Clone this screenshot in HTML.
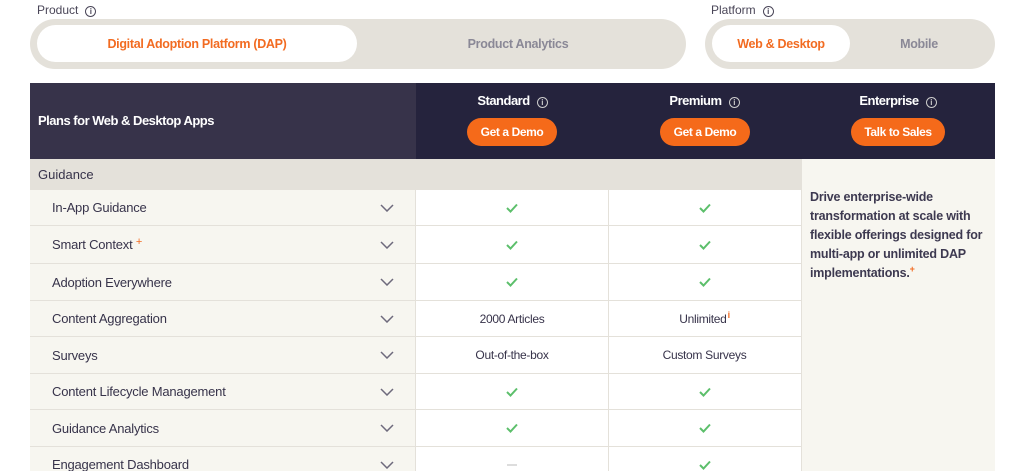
<!DOCTYPE html>
<html><head><meta charset="utf-8"><style>
*{margin:0;padding:0;box-sizing:border-box}
html,body{width:1024px;height:471px;overflow:hidden}
body{background:#fff;font-family:"Liberation Sans",sans-serif;position:relative;color:#37334a}
.a{position:absolute}
.lbl{font-size:12px;color:#4a4658;top:3px}
.info{display:inline-block;width:11px;height:11px;border:1px solid currentColor;border-radius:50%;font-size:8px;line-height:9px;text-align:center;vertical-align:0px;margin-left:7px;font-weight:bold}
.pill{background:#e4e1da;border-radius:25px}
.sel{background:#fff;border-radius:19px;color:#f26b21;font-size:12.5px;display:flex;align-items:center;justify-content:center;letter-spacing:-0.3px;font-weight:bold}
.un{color:#8a8896;font-size:12.5px;display:flex;align-items:center;justify-content:center;letter-spacing:-0.3px;font-weight:bold}
.hd{color:#fff;font-weight:bold;font-size:13px;letter-spacing:-0.5px;text-align:center}
.btn{background:#f56a1a;color:#fff;font-weight:bold;font-size:12px;border-radius:14px;height:28px;line-height:28px;text-align:center;letter-spacing:-0.4px}
.row{position:absolute;left:30px;width:771px;border-bottom:1px solid #e4e1da}
.row .f{position:absolute;left:0;top:0;bottom:0;width:386px;background:#f7f6f0;border-right:1px solid #e4e1da;font-size:13px;padding-left:22px;display:flex;align-items:center;letter-spacing:-0.2px}
.row .c{position:absolute;top:0;bottom:0;width:193px;display:flex;align-items:center;justify-content:center;font-size:12px;letter-spacing:-0.3px}
.row .c1{left:386px;border-right:1px solid #e4e1da}
.row .c2{left:578px}
.chev{position:absolute;left:350px;top:50%;margin-top:-4px}
</style></head><body>
<div class="a lbl" style="left:37px">Product<span class="info">i</span></div>
<div class="a lbl" style="left:711px">Platform<span class="info">i</span></div>
<div class="a pill" style="left:30px;top:19px;width:656px;height:50px"></div>
<div class="a sel" style="left:37px;top:25px;width:320px;height:37px">Digital Adoption Platform (DAP)</div>
<div class="a un" style="left:357px;top:25px;width:322px;height:37px">Product Analytics</div>
<div class="a pill" style="left:705px;top:19px;width:290px;height:50px"></div>
<div class="a sel" style="left:712px;top:25px;width:138px;height:37px">Web &amp; Desktop</div>
<div class="a un" style="left:850px;top:25px;width:138px;height:37px">Mobile</div>

<div class="a" style="left:30px;top:83px;width:386px;height:76px;background:#37334a"></div>
<div class="a" style="left:416px;top:83px;width:579px;height:76px;background:#25233d"></div>
<div class="a hd" style="left:38px;top:113px;font-size:13px">Plans for Web &amp; Desktop Apps</div>
<div class="a hd" style="left:416px;top:93px;width:193px">Standard<span class="info" style="color:#ccc">i</span></div>
<div class="a hd" style="left:608px;top:93px;width:193px">Premium<span class="info" style="color:#ccc">i</span></div>
<div class="a hd" style="left:801px;top:93px;width:194px">Enterprise<span class="info" style="color:#ccc">i</span></div>
<div class="a btn" style="left:467px;top:118px;width:90px">Get a Demo</div>
<div class="a btn" style="left:660px;top:118px;width:90px">Get a Demo</div>
<div class="a btn" style="left:851px;top:118px;width:94px">Talk to Sales</div>

<div class="a" style="left:30px;top:159px;width:771px;height:31px;background:#e4e1da;font-size:13px;padding-left:8px;line-height:31px">Guidance</div>
<div class="a" style="left:801px;top:159px;width:194px;height:312px;background:#f7f6f0;border-left:1px solid #e4e1da"></div>
<div class="a" style="left:810px;top:188px;width:185px;font-size:12.5px;line-height:19px;font-weight:bold;color:#3d3950;letter-spacing:-0.2px">Drive enterprise-wide transformation at scale with flexible offerings designed for multi-app or unlimited DAP implementations.<span style="color:#f26b21;font-size:9px;position:relative;top:-5px;line-height:0">+</span></div>

<svg width="0" height="0" style="position:absolute"><defs>
<symbol id="ck" viewBox="0 0 12 10"><path d="M1 5l3.5 3.5L11 1.5" fill="none" stroke="#5cbf6b" stroke-width="2"/></symbol>
<symbol id="cv" viewBox="0 0 14 8"><path d="M1 1l6 6 6-6" fill="none" stroke="#6e6a7c" stroke-width="1.5"/></symbol>
</defs></svg>

<div class="row" style="top:190px;height:36px"><div class="f">In-App Guidance<svg class="chev" width="14" height="8"><use href="#cv"/></svg></div><div class="c c1"><svg width="12" height="10"><use href="#ck"/></svg></div><div class="c c2"><svg width="12" height="10"><use href="#ck"/></svg></div></div>
<div class="row" style="top:226px;height:38px"><div class="f">Smart Context&nbsp;<span style="color:#f26b21;font-size:11px;position:relative;top:-3px">+</span><svg class="chev" width="14" height="8"><use href="#cv"/></svg></div><div class="c c1"><svg width="12" height="10"><use href="#ck"/></svg></div><div class="c c2"><svg width="12" height="10"><use href="#ck"/></svg></div></div>
<div class="row" style="top:264px;height:37px"><div class="f">Adoption Everywhere<svg class="chev" width="14" height="8"><use href="#cv"/></svg></div><div class="c c1"><svg width="12" height="10"><use href="#ck"/></svg></div><div class="c c2"><svg width="12" height="10"><use href="#ck"/></svg></div></div>
<div class="row" style="top:301px;height:36px"><div class="f">Content Aggregation<svg class="chev" width="14" height="8"><use href="#cv"/></svg></div><div class="c c1">2000 Articles</div><div class="c c2">Unlimited<span style="color:#f26b21;font-size:9px;font-weight:bold;position:relative;top:-4px;margin-left:1px">i</span></div></div>
<div class="row" style="top:337px;height:37px"><div class="f">Surveys<svg class="chev" width="14" height="8"><use href="#cv"/></svg></div><div class="c c1">Out-of-the-box</div><div class="c c2">Custom Surveys</div></div>
<div class="row" style="top:374px;height:36px"><div class="f">Content Lifecycle Management<svg class="chev" width="14" height="8"><use href="#cv"/></svg></div><div class="c c1"><svg width="12" height="10"><use href="#ck"/></svg></div><div class="c c2"><svg width="12" height="10"><use href="#ck"/></svg></div></div>
<div class="row" style="top:410px;height:37px"><div class="f">Guidance Analytics<svg class="chev" width="14" height="8"><use href="#cv"/></svg></div><div class="c c1"><svg width="12" height="10"><use href="#ck"/></svg></div><div class="c c2"><svg width="12" height="10"><use href="#ck"/></svg></div></div>
<div class="row" style="top:447px;height:24px;border-bottom:none"><div class="f" style="align-items:flex-start;padding-top:10px">Engagement Dashboard<svg class="chev" style="top:14px;margin-top:0" width="14" height="8"><use href="#cv"/></svg></div><div class="c c1" style="align-items:flex-start;padding-top:17px"><div style="width:10px;height:2px;background:#ddd"></div></div><div class="c c2" style="align-items:flex-start;padding-top:13px"><svg width="12" height="10"><use href="#ck"/></svg></div></div>
</body></html>
